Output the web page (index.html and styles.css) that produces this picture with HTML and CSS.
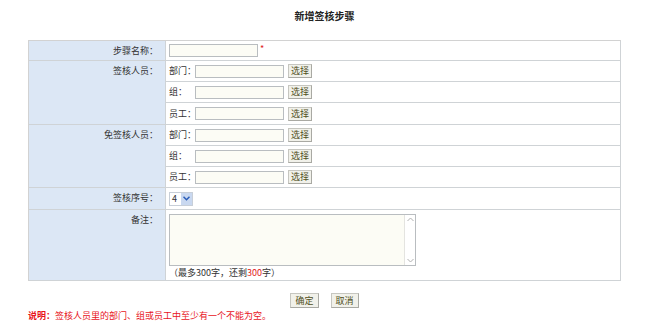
FILE: index.html
```html
<!DOCTYPE html>
<html lang="zh-CN">
<head>
    <meta charset="UTF-8">
    <title>新增签核步骤</title>
    <link rel="stylesheet" href="styles.css">
</head>
<body>
    <h1 class="page-title">新增签核步骤</h1>

    <div class="form-grid">
        <div class="label">步骤名称：</div>
        <div class="field"><input type="text" class="txt"><span class="required">*</span></div>

        <div class="label span-3">签核人员：</div>
        <div class="field"><span class="sub-label">部门：</span><input type="text" class="txt"><button class="btn-pick">选择</button></div>
        <div class="field"><span class="sub-label">组：</span><input type="text" class="txt"><button class="btn-pick">选择</button></div>
        <div class="field"><span class="sub-label">员工：</span><input type="text" class="txt"><button class="btn-pick">选择</button></div>

        <div class="label span-3">免签核人员：</div>
        <div class="field"><span class="sub-label">部门：</span><input type="text" class="txt"><button class="btn-pick">选择</button></div>
        <div class="field"><span class="sub-label">组：</span><input type="text" class="txt"><button class="btn-pick">选择</button></div>
        <div class="field"><span class="sub-label">员工：</span><input type="text" class="txt"><button class="btn-pick">选择</button></div>

        <div class="label">签核序号：</div>
        <div class="field">
            <div class="select-box">
                <span class="select-value">4</span>
                <span class="select-arrow">
                    <svg width="7" height="5" viewBox="0 0 7 5"><path d="M0.5 0.8 L3.5 3.8 L6.5 0.8" fill="none" stroke="#2a5cb8" stroke-width="1.5"/></svg>
                </span>
            </div>
        </div>

        <div class="label">备注：</div>
        <div class="field field-remark">
            <div class="memo">
                <textarea class="memo-text"></textarea>
                <div class="memo-bar">
                    <svg width="7" height="5" viewBox="0 0 7 5"><path d="M0.5 4 L3.5 1 L6.5 4" fill="none" stroke="#b0b0b0" stroke-width="1"/></svg>
                    <svg width="7" height="5" viewBox="0 0 7 5"><path d="M0.5 1 L3.5 4 L6.5 1" fill="none" stroke="#b0b0b0" stroke-width="1"/></svg>
                </div>
            </div>
            <div class="memo-tip">（最多300字，还剩<span class="num-left">300</span>字）</div>
        </div>
    </div>

    <div class="actions">
        <button class="btn">确定</button>
        <button class="btn">取消</button>
    </div>

    <p class="note"><strong>说明：</strong>签核人员里的部门、组或员工中至少有一个不能为空。</p>
</body>
</html>
```

FILE: styles.css
```css
/* General Styles */
body {
    margin: 0;
    padding: 0;
    background-color: #fff;
    font-family: "Noto Sans CJK SC", "DejaVu Sans", sans-serif;
    font-size: 9px;
    line-height: 12px;
    color: #333;
}

.page-title {
    margin: 0;
    padding-top: 10px;
    height: 40px;
    text-align: center;
    font-size: 10px;
    line-height: 12px;
    font-weight: bold;
    color: #222;
    box-sizing: border-box;
}

/* Form grid */
.form-grid {
    display: grid;
    grid-template-columns: 137px 1fr;
    grid-template-rows: 20px 21px 21px 22px 21px 21px 21px 22px 71px;
    width: 593px;
    margin: 0 auto;
    border-top: 1px solid #d2d2d2;
    border-left: 1px solid #d2d2d2;
    box-sizing: border-box;
}

.label,
.field {
    border-right: 1px solid #cfd3d6;
    border-bottom: 1px solid #cfd3d6;
    white-space: nowrap;
}

.label {
    padding: 4px 7px 0 0;
    background-color: #dce7f5;
    text-align: right;
}

.span-3 {
    grid-row: span 3;
}

.field {
    display: flex;
    align-items: center;
    padding-left: 3px;
    background-color: #fff;
}

.sub-label {
    width: 26px;
    flex-shrink: 0;
}

.txt {
    width: 89px;
    height: 13px;
    padding: 0;
    margin: 0;
    border: 1px solid #b9bdc0;
    background-color: #fcfcf5;
    box-sizing: border-box;
}

.required {
    color: #e02020;
    margin: -3px 0 0 2px;
}

.btn-pick,
.btn {
    height: 14px;
    padding: 0 2px;
    margin: 0 0 0 4px;
    border: 1px solid #c6c6c0;
    border-right-color: #a9a9a3;
    border-bottom-color: #a9a9a3;
    background-color: #f1f1ea;
    color: #4f4f22;
    font-family: inherit;
    font-size: 9px;
    line-height: 12px;
    cursor: pointer;
}

/* Select */
.select-box {
    display: flex;
    align-items: center;
    height: 12px;
    border: 1px solid #c8cfd8;
    background-color: #fff;
}

.select-value {
    padding: 0 4px 0 2px;
}

.select-arrow {
    display: flex;
    align-items: center;
    justify-content: center;
    width: 11px;
    height: 12px;
    background-color: #c9d8f0;
}

/* Remark */
.field-remark {
    flex-direction: column;
    align-items: flex-start;
    padding-top: 4px;
}

.memo {
    display: flex;
    width: 247px;
    height: 52px;
    border: 1px solid #b9bdc0;
    background-color: #fcfcf5;
    box-sizing: border-box;
}

.memo-text {
    flex: 1;
    border: none;
    background: transparent;
    resize: none;
    outline: none;
}

.memo-bar {
    width: 10px;
    display: flex;
    flex-direction: column;
    justify-content: space-between;
    align-items: center;
    padding: 2px 0;
    border-left: 1px solid #e4e4e0;
    background-color: #fff;
}

.memo-tip {
    margin-top: 1px;
}

.num-left {
    color: #e02020;
}

/* Bottom */
.actions {
    display: flex;
    justify-content: center;
    gap: 12px;
    margin-top: 12px;
}

.actions .btn {
    margin: 0;
    height: 15px;
    padding: 0 4px;
}

.note {
    margin: 2px 0 0 28px;
    color: #e8141c;
    font-size: 9px;
}
```
